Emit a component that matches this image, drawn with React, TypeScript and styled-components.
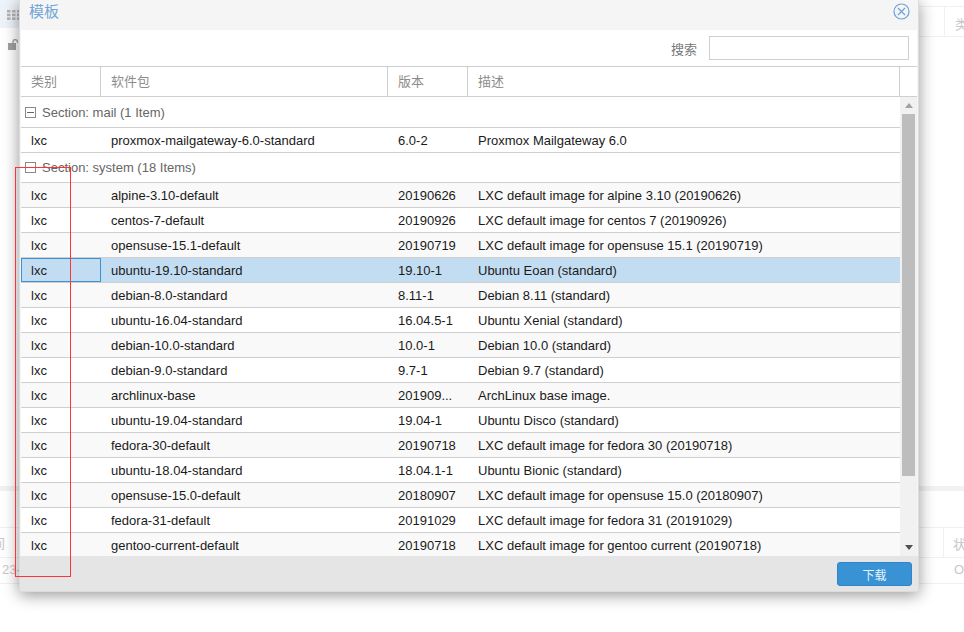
import styled, { createGlobalStyle } from "styled-components"

const GlobalStyle = createGlobalStyle`
	html, body {
		margin: 0;
		padding: 0;
		background: #fff;
		font-family: "Liberation Sans", "Noto Sans CJK SC", Arial, sans-serif;
		font-size: 13px;
	}
`

interface Template {
	name: string
	version: string
	description: string
}

const systemTemplates: Template[] = [
	{ name: "alpine-3.10-default", version: "20190626", description: "LXC default image for alpine 3.10 (20190626)" },
	{ name: "centos-7-default", version: "20190926", description: "LXC default image for centos 7 (20190926)" },
	{ name: "opensuse-15.1-default", version: "20190719", description: "LXC default image for opensuse 15.1 (20190719)" },
	{ name: "ubuntu-19.10-standard", version: "19.10-1", description: "Ubuntu Eoan (standard)" },
	{ name: "debian-8.0-standard", version: "8.11-1", description: "Debian 8.11 (standard)" },
	{ name: "ubuntu-16.04-standard", version: "16.04.5-1", description: "Ubuntu Xenial (standard)" },
	{ name: "debian-10.0-standard", version: "10.0-1", description: "Debian 10.0 (standard)" },
	{ name: "debian-9.0-standard", version: "9.7-1", description: "Debian 9.7 (standard)" },
	{ name: "archlinux-base", version: "201909...", description: "ArchLinux base image." },
	{ name: "ubuntu-19.04-standard", version: "19.04-1", description: "Ubuntu Disco (standard)" },
	{ name: "fedora-30-default", version: "20190718", description: "LXC default image for fedora 30 (20190718)" },
	{ name: "ubuntu-18.04-standard", version: "18.04.1-1", description: "Ubuntu Bionic (standard)" },
	{ name: "opensuse-15.0-default", version: "20180907", description: "LXC default image for opensuse 15.0 (20180907)" },
	{ name: "fedora-31-default", version: "20191029", description: "LXC default image for fedora 31 (20191029)" },
	{ name: "gentoo-current-default", version: "20190718", description: "LXC default image for gentoo current (20190718)" },
]

const TemplateRow = ({ item, alt, selected }: { item: Template; alt?: boolean; selected?: boolean }) => (
	<Row $alt={alt} $selected={selected}>
		<TypeCell $focused={selected}>lxc</TypeCell>
		<Cell>{item.name}</Cell>
		<Cell>{item.version}</Cell>
		<Cell>{item.description}</Cell>
	</Row>
)

const SectionHeader = ({ label, tall }: { label: string; tall?: boolean }) => (
	<Section $tall={tall}>
		<Collapse>
			<svg width="11" height="11" viewBox="0 0 11 11">
				<rect x="0.5" y="0.5" width="10" height="10" fill="none" stroke="#8a8a8a" />
				<path d="M2 5.5h7" stroke="#666" />
			</svg>
		</Collapse>
		{label}
	</Section>
)

export default function App() {
	return (
		<Page>
			<GlobalStyle />
			<Backdrop>
				<BackTop>
					<NavCell>
						<svg width="14" height="10" viewBox="0 0 14 10" fill="#b4b4b4">
							<rect x="0" y="0" width="3.5" height="2.5" />
							<rect x="5" y="0" width="3.5" height="2.5" />
							<rect x="10" y="0" width="3.5" height="2.5" />
							<rect x="0" y="3.7" width="3.5" height="2.5" />
							<rect x="5" y="3.7" width="3.5" height="2.5" />
							<rect x="10" y="3.7" width="3.5" height="2.5" />
							<rect x="0" y="7.4" width="3.5" height="2.5" />
							<rect x="5" y="7.4" width="3.5" height="2.5" />
							<rect x="10" y="7.4" width="3.5" height="2.5" />
						</svg>
					</NavCell>
					<BackHeadRight>
						<BackHeadCell>类</BackHeadCell>
					</BackHeadRight>
				</BackTop>
				<LockRow>
					<svg width="12" height="11" viewBox="0 0 12 11" fill="#a0a0a0">
						<rect x="0" y="4" width="8" height="7" />
						<path d="M5 4V2.8a2.2 2.2 0 0 1 4.4 0v1" fill="none" stroke="#a0a0a0" strokeWidth="1.3" />
					</svg>
				</LockRow>
				<BackBand />
				<BackGridHead>
					<BackHeadStart>间</BackHeadStart>
					<BackHeadEnd>状</BackHeadEnd>
				</BackGridHead>
				<BackGridRow>
					<BackRowStart>23-</BackRowStart>
					<BackRowEnd>O</BackRowEnd>
				</BackGridRow>
			</Backdrop>

			<Modal>
				<TitleBar>
					<Title>模板</Title>
					<CloseIcon width="17" height="17" viewBox="0 0 17 17">
						<circle cx="8.5" cy="8.5" r="7.5" fill="none" stroke="#6ba3d6" strokeWidth="1.2" />
						<path d="M5 5l7 7M12 5l-7 7" stroke="#6ba3d6" strokeWidth="1.2" />
					</CloseIcon>
				</TitleBar>
				<Body>
					<Toolbar>
						<SearchLabel>搜索</SearchLabel>
						<SearchInput />
					</Toolbar>
					<GridHead>
						<HeadCell>类别</HeadCell>
						<HeadCell>软件包</HeadCell>
						<HeadCell>版本</HeadCell>
						<HeadCell>描述</HeadCell>
						<HeadFiller />
					</GridHead>
					<GridBody>
						<RowsViewport>
							<SectionHeader label="Section: mail (1 Item)" tall />
							<TemplateRow
								item={{
									name: "proxmox-mailgateway-6.0-standard",
									version: "6.0-2",
									description: "Proxmox Mailgateway 6.0",
								}}
							/>
							<SectionHeader label="Section: system (18 Items)" />
							{systemTemplates.map((item, i) => (
								<TemplateRow
									key={item.name}
									item={item}
									alt={i % 2 === 0}
									selected={item.name === "ubuntu-19.10-standard"}
								/>
							))}
						</RowsViewport>
						<Scrollbar>
							<ArrowButton>
								<svg width="8" height="5" viewBox="0 0 8 5">
									<path d="M4 0l4 5H0z" fill="#a3a3a3" />
								</svg>
							</ArrowButton>
							<ThumbTrack>
								<Thumb />
							</ThumbTrack>
							<ArrowButton>
								<svg width="8" height="5" viewBox="0 0 8 5">
									<path d="M0 0h8L4 5z" fill="#505050" />
								</svg>
							</ArrowButton>
						</Scrollbar>
					</GridBody>
				</Body>
				<Footer>
					<DownloadButton>下载</DownloadButton>
				</Footer>
			</Modal>
			<RedMarker />
		</Page>
	)
}

const Page = styled.div`
	position: relative;
	width: 964px;
	height: 632px;
	overflow: hidden;
	background: #fff;
`

const Backdrop = styled.div`
	display: flex;
	flex-direction: column;
	height: 100%;
	color: #c8c8c8;
	font-size: 13px;
`

const BackTop = styled.div`
	display: flex;
	justify-content: space-between;
	align-items: flex-start;
	height: 38px;
`

const NavCell = styled.div`
	width: 24px;
	height: 28px;
	background: #eef3f9;
	display: flex;
	align-items: center;
	padding: 2px 0 0 7px;
	box-sizing: border-box;
`

const BackHeadRight = styled.div`
	width: 45px;
	height: 31px;
	margin-top: 6px;
	box-sizing: border-box;
	border-top: 1px solid #f0f0f0;
	border-bottom: 1px solid #f0f0f0;
	display: flex;
	justify-content: flex-end;
`

const BackHeadCell = styled.div`
	width: 20px;
	border-left: 1px solid #f0f0f0;
	padding: 7px 0 0 10px;
	box-sizing: border-box;
	white-space: nowrap;
	overflow: hidden;
`

const LockRow = styled.div`
	height: 15px;
	padding: 1px 0 0 8px;
	margin-bottom: 432px;
	display: flex;
`

const BackBand = styled.div`
	height: 5px;
	background: #f2f2f2;
	margin-bottom: 36px;
`

const BackGridHead = styled.div`
	height: 31px;
	box-sizing: border-box;
	border-top: 1px solid #f0f0f0;
	border-bottom: 1px solid #f0f0f0;
	display: flex;
	justify-content: space-between;
	align-items: center;
`

const BackHeadStart = styled.div`
	margin-left: -8px;
`

const BackHeadEnd = styled.div`
	width: 21px;
	height: 100%;
	border-left: 1px solid #f0f0f0;
	padding: 6px 0 0 9px;
	box-sizing: border-box;
`

const BackGridRow = styled.div`
	height: 26px;
	box-sizing: border-box;
	border-bottom: 1px solid #f0f0f0;
	display: flex;
	justify-content: space-between;
	padding-top: 4px;
`

const BackRowStart = styled.div`
	padding-left: 2px;
`

const BackRowEnd = styled.div`
	width: 10px;
`

const Modal = styled.div`
	position: absolute;
	left: 19px;
	top: 0;
	width: 900px;
	height: 592px;
	display: flex;
	flex-direction: column;
	background: #f5f5f5;
	border: 1px solid #dcdcdc;
	border-top: 0;
	border-radius: 0 0 4px 4px;
	box-sizing: border-box;
	box-shadow: 0 3px 16px rgba(0, 0, 0, 0.42);
`

const TitleBar = styled.div`
	height: 30px;
	flex: none;
	display: flex;
	align-items: center;
	justify-content: space-between;
	padding: 1px 8px 8px 9px;
	box-sizing: border-box;
`

const Title = styled.div`
	font-size: 15px;
	color: #72a5d8;
	line-height: 22px;
`

const CloseIcon = styled.svg`
	display: block;
`

const Body = styled.div`
	margin: 0 1px;
	background: #fff;
	flex: 1;
	min-height: 0;
	display: flex;
	flex-direction: column;
`

const Toolbar = styled.div`
	height: 36px;
	flex: none;
	display: flex;
	align-items: center;
	justify-content: flex-end;
	padding: 0 8px 0 0;
	box-sizing: border-box;
`

const SearchLabel = styled.label`
	font-size: 13px;
	color: #777;
	margin-right: 12px;
`

const SearchInput = styled.input`
	width: 200px;
	height: 24px;
	box-sizing: border-box;
	border: 1px solid #cfcfcf;
	background: #fff;
	padding: 0;
	outline: none;
`

const GridHead = styled.div`
	display: grid;
	grid-template-columns: 80px 287px 80px 432px 17px;
	height: 31px;
	flex: none;
	box-sizing: border-box;
	border-top: 1px solid #cfcfcf;
	border-bottom: 1px solid #cfcfcf;
`

const HeadCell = styled.div`
	padding: 6px 0 0 10px;
	box-sizing: border-box;
	border-right: 1px solid #cfcfcf;
	font-size: 13px;
	line-height: 18px;
	color: #8c8c8c;
`

const HeadFiller = styled.div``

const GridBody = styled.div`
	flex: 1;
	min-height: 0;
	display: flex;
	overflow: hidden;
`

const RowsViewport = styled.div`
	width: 879px;
	flex: none;
	overflow: hidden;
`

const Section = styled.div<{ $tall?: boolean }>`
	height: ${(p) => (p.$tall ? "31px" : "30px")};
	box-sizing: border-box;
	display: flex;
	align-items: center;
	padding-left: 4px;
	border-bottom: 1px solid #cfcfcf;
	background: #fff;
	color: #666;
	font-size: 13px;
`

const Collapse = styled.span`
	display: inline-flex;
	margin-right: 6px;
`

const Row = styled.div<{ $alt?: boolean; $selected?: boolean }>`
	display: grid;
	grid-template-columns: 80px 287px 80px 432px;
	height: 25px;
	box-sizing: border-box;
	border-bottom: 1px solid #cfcfcf;
	color: #1a1a1a;
	font-size: 13px;
	background: ${(p) => (p.$selected ? "#c2ddf2" : p.$alt ? "#f9f9f9" : "#fff")};
`

const Cell = styled.div`
	padding-left: 10px;
	line-height: 26px;
	white-space: nowrap;
	overflow: hidden;
`

const TypeCell = styled(Cell)<{ $focused?: boolean }>`
	border: ${(p) => (p.$focused ? "1px solid #3892d4" : "0")};
	padding-left: ${(p) => (p.$focused ? "9px" : "10px")};
	line-height: ${(p) => (p.$focused ? "24px" : "26px")};
	box-sizing: border-box;
`

const Scrollbar = styled.div`
	width: 17px;
	flex: none;
	display: flex;
	flex-direction: column;
	background: #f1f1f1;
`

const ArrowButton = styled.div`
	height: 17px;
	flex: none;
	display: flex;
	align-items: center;
	justify-content: center;
`

const ThumbTrack = styled.div`
	flex: 1;
	padding: 0 2px;
`

const Thumb = styled.div`
	height: 362px;
	background: #bdbdbd;
`

const Footer = styled.div`
	height: 35px;
	flex: none;
	background: #e5e5e5;
	display: flex;
	align-items: center;
	justify-content: flex-end;
	padding: 1px 6px 0 0;
	box-sizing: border-box;
`

const DownloadButton = styled.button`
	width: 75px;
	height: 24px;
	border: 1px solid #2f85c9;
	border-radius: 3px;
	background: #3892d4;
	color: #e6f2fb;
	font-family: inherit;
	font-size: 12px;
	padding: 0;
`

const RedMarker = styled.div`
	position: absolute;
	left: 15px;
	top: 167px;
	width: 56px;
	height: 410px;
	box-sizing: border-box;
	border: 1px solid #ff3333;
	pointer-events: none;
`
